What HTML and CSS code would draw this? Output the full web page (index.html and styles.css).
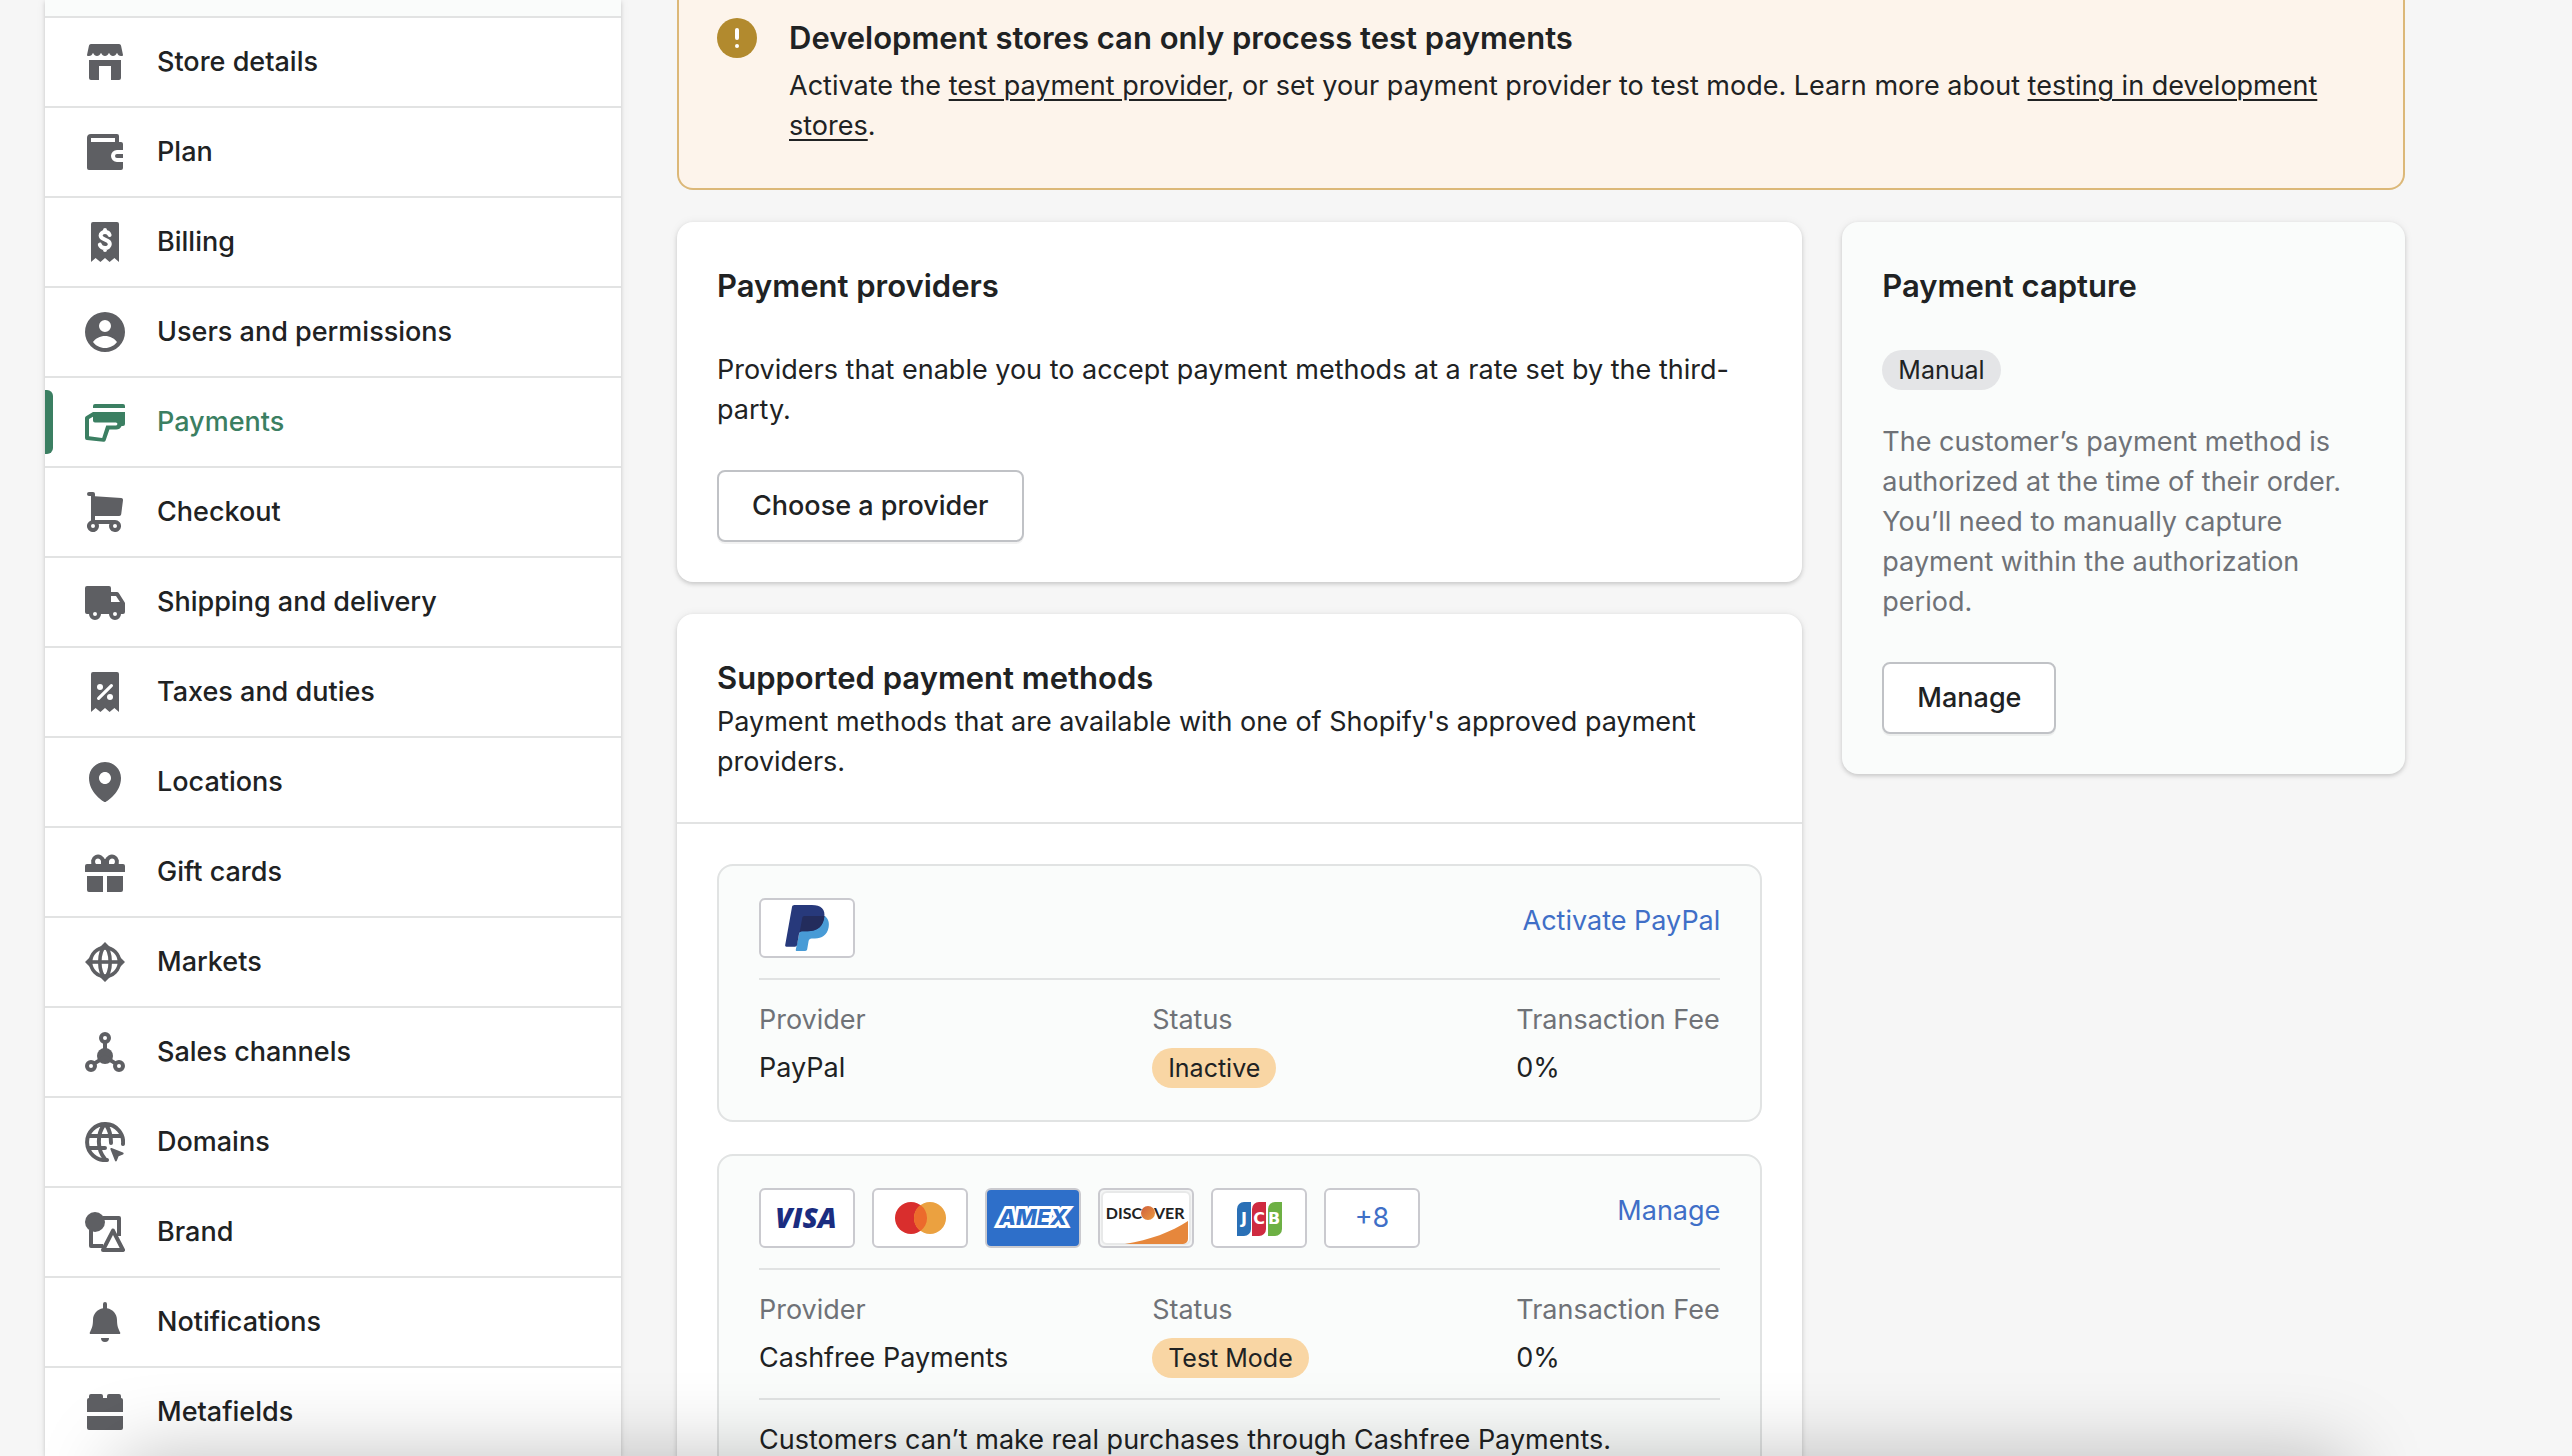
FILE: index.html
```html
<!DOCTYPE html>
<html lang="en">
<head>
<meta charset="utf-8">
<title>Settings - Payments</title>
<meta name="viewport" content="width=device-width, initial-scale=1">
<link rel="stylesheet" href="styles.css">
</head>
<body>
<div class="page">
  <nav class="sidebar" aria-label="Settings">
    <div class="sidebar-head"></div>
    <ul class="menu">
      <li><a class="menu-link" href="#store">
        <svg class="icon" viewBox="0 0 20 20"><path d="M3 1h14a1 1 0 0 1 1 .8l1 4.7c0 .6-.5.5-1 .5-1 0-1.500-.4-2-1.600-.5 1.200-1.200 1.600-2 1.600s-1.500-.4-2-1.600C11.500 6.600 10.800 7 10 7s-1.500-.4-2-1.600C7.500 6.600 6.800 7 6 7s-1.500-.4-2-1.600C3.500 6.600 3 7 2 7c-.5 0-1 .1-1-.5l1-4.700A1 1 0 0 1 3 1ZM2 9h16v9a1 1 0 0 1-1 1h-4v-7H7v7H3a1 1 0 0 1-1-1Z"/></svg>
        Store details</a></li>
      <li><a class="menu-link" href="#plan">
        <svg class="icon" viewBox="0 0 20 20"><path fill-rule="evenodd" d="M3 1h13a1 1 0 0 1 1 1v3h1a1 1 0 0 1 1 1v3h-3a3 3 0 0 0 0 6h3v3a1 1 0 0 1-1 1H2a1 1 0 0 1-1-1V3a2 2 0 0 1 2-2Zm0 2v2h12V3ZM16 11h3v2h-3a1 1 0 0 1 0-2Z"/></svg>
        Plan</a></li>
      <li><a class="menu-link" href="#billing">
        <svg class="icon" viewBox="0 0 20 20"><path d="M4 0h12a1 1 0 0 1 1 1v19l-2.300-2-2.400 2L10 18l-2.300 2-2.400-2L3 20V1a1 1 0 0 1 1-1Z"/><path fill="none" stroke="#fff" stroke-width="2" stroke-linecap="round" d="M12.300 6.500C12 5.500 11.200 5 10 5 8.800 5 7.800 5.700 7.800 6.800c0 2.600 4.600 1.400 4.600 4.200 0 1.200-1 2-2.400 2s-2.300-.7-2.600-1.700M10 4v1M10 13v1"/></svg>
        Billing</a></li>
      <li><a class="menu-link" href="#users">
        <svg class="icon" viewBox="0 0 20 20"><path fill-rule="evenodd" d="M10 0a10 10 0 1 1 0 20 10 10 0 0 1 0-20Zm0 4a3 3 0 1 0 0 6 3 3 0 0 0 0-6ZM4 15c1.300 1.800 3.500 3 6 3s4.700-1.200 6-3c-1.300-1.800-3.500-3-6-3s-4.700 1.200-6 3Z"/></svg>
        Users and permissions</a></li>
      <li><a class="menu-link active" href="#payments" aria-current="page">
        <svg class="icon" viewBox="0 0 20 20"><path fill-rule="evenodd" d="M5 1h14a1 1 0 0 1 1 1v1H4V2a1 1 0 0 1 1-1ZM4 5h16v6a1 1 0 0 1-1 1h-.7a3 3 0 0 1-2.800 1.800H12.200l-1.900 5.400a1 1 0 0 1-1.100.7L.9 19a1 1 0 0 1-.9-1V8c0-.4.200-.7.500-.9ZM2 8.500v8.600l6.600.9 2-6.200h4.700c.5 0 .9-.4.900-.8s-.3-.8-.8-.8H5a1 1 0 0 1-1-1V7.400Z"/></svg>
        Payments</a></li>
      <li><a class="menu-link" href="#checkout">
        <svg class="icon" viewBox="0 0 20 20"><path fill-rule="evenodd" d="M2 0h2a1 1 0 0 1 1 1v1.100l13.100.9a1 1 0 0 1 .9 1.100l-.9 7a1 1 0 0 1-1 .9H5v2h10a3 3 0 1 1-2.800 2H6.800A3 3 0 1 1 3 14.200V2H2a1 1 0 0 1 0-2ZM4 16a1 1 0 1 0 0 2 1 1 0 0 0 0-2Zm11 0a1 1 0 1 0 0 2 1 1 0 0 0 0-2Z"/></svg>
        Checkout</a></li>
      <li><a class="menu-link" href="#shipping">
        <svg class="icon" viewBox="0 0 20 20"><path fill-rule="evenodd" d="M1 2h11a1 1 0 0 1 1 1v2h3a1 1 0 0 1 .8.4l3 4.700a1 1 0 0 1 .2.600V15a1 1 0 0 1-1 1h-1a3 3 0 0 1-6 0H8a3 3 0 0 1-6 0H1a1 1 0 0 1-1-1V3a1 1 0 0 1 1-1Zm12 5v3h4.500l-2-3ZM5 15a1 1 0 1 0 0 2 1 1 0 0 0 0-2Zm10 0a1 1 0 1 0 0 2 1 1 0 0 0 0-2Z"/></svg>
        Shipping and delivery</a></li>
      <li><a class="menu-link" href="#taxes">
        <svg class="icon" viewBox="0 0 20 20"><path d="M4 0h12a1 1 0 0 1 1 1v19l-2.300-2-2.400 2L10 18l-2.300 2-2.400-2L3 20V1a1 1 0 0 1 1-1Z"/><g fill="#fff"><circle cx="7.500" cy="7.500" r="1.500"/><circle cx="12.500" cy="12.500" r="1.500"/></g><path stroke="#fff" stroke-width="1.600" stroke-linecap="round" d="m13.200 6.800-6.400 6.400"/></svg>
        Taxes and duties</a></li>
      <li><a class="menu-link" href="#locations">
        <svg class="icon" viewBox="0 0 20 20"><path d="M10 0C5.589 0 2 3.589 2 8c0 7.495 7.197 11.694 7.504 11.869a.996.996 0 0 0 .992 0C10.803 19.694 18 15.495 18 8c0-4.412-3.589-8-8-8zm0 11c-1.657 0-3-1.343-3-3s1.343-3 3-3 3 1.343 3 3-1.343 3-3 3z"/></svg>
        Locations</a></li>
      <li><a class="menu-link" href="#gift-cards">
        <svg class="icon" viewBox="0 0 20 20"><path d="M1 6h18a1 1 0 0 1 1 1v3H0V7a1 1 0 0 1 1-1ZM1 12h8v8H2a1 1 0 0 1-1-1ZM11 12h8v7a1 1 0 0 1-1 1h-7Z"/><path fill="none" stroke="currentColor" stroke-width="2" d="M4.700 6.500A2.500 2.500 0 1 1 9 4.500V6.500M15.300 6.500A2.500 2.500 0 1 0 11 4.500V6.500M10 3.500v3"/></svg>
        Gift cards</a></li>
      <li><a class="menu-link" href="#markets">
        <svg class="icon" viewBox="0 0 20 20"><path d="m10 0 3.500 3.500h-7ZM10 20l3.500-3.500h-7ZM0 10l3.500-3.500v7ZM20 10l-3.500-3.500v7Z"/><g fill="none" stroke="currentColor" stroke-width="1.800"><circle cx="10" cy="10" r="7.200"/><ellipse cx="10" cy="10" rx="2.600" ry="7.200"/><path d="M2 10h16"/></g></svg>
        Markets</a></li>
      <li><a class="menu-link" href="#channels">
        <svg class="icon" viewBox="0 0 20 20"><circle cx="10" cy="12" r="4"/><g fill="none" stroke="currentColor" stroke-width="2"><circle cx="10" cy="3" r="2"/><circle cx="3" cy="17" r="2"/><circle cx="17" cy="17" r="2"/><path d="M10 5v5M4.700 15.700 10 12.500l5.300 3.200"/></g></svg>
        Sales channels</a></li>
      <li><a class="menu-link" href="#domains">
        <svg class="icon" viewBox="0 0 20 20"><g fill="none" stroke="currentColor" stroke-width="2" stroke-linecap="round"><path d="M19 11A9 9 0 1 0 11 19M2 7h16M2 13h8M9.500 1.500C6 6 6 14 10 18.500M10.500 1.500C12.500 4 13 7 13 10.500"/></g><path d="m13.300 13 5.700 2.300c.5.200.4.800 0 .9l-2.200.9-.9 2.300c-.2.400-.7.400-.9 0l-2.300-5.800c-.1-.4.200-.8.600-.6Z"/></svg>
        Domains</a></li>
      <li><a class="menu-link" href="#brand">
        <svg class="icon" viewBox="0 0 20 20"><circle cx="5" cy="5" r="5"/><g fill="none" stroke="currentColor" stroke-width="2" stroke-linejoin="round"><path d="M9 3h8v9M3 9v8h6"/><path d="m14 9.300 5 9.700H9Z"/></g></svg>
        Brand</a></li>
      <li><a class="menu-link" href="#notifications">
        <svg class="icon" viewBox="0 0 20 20"><path d="M10 0a1 1 0 0 1 1 1v2.100c2.900.5 5 2.900 5 5.900 0 3 .7 4.500 1.600 6.200.2.400 0 .8-.5.800H2.900c-.5 0-.7-.4-.5-.8C3.300 13.500 4 12 4 9c0-3 2.100-5.400 5-5.900V1a1 1 0 0 1 1-1ZM8 18h4a2 2 0 0 1-4 0Z"/></svg>
        Notifications</a></li>
      <li><a class="menu-link" href="#metafields">
        <svg class="icon" viewBox="0 0 20 20"><path d="M3 1h5a1 1 0 0 1 1 1v1h2V2a1 1 0 0 1 1-1h5a1 1 0 0 1 1 1v1a1 1 0 0 1 1 1v6H1V4a1 1 0 0 1 1-1V2a1 1 0 0 1 1-1ZM1 12h18v6a1 1 0 0 1-1 1H2a1 1 0 0 1-1-1Z"/></svg>
        Metafields</a></li>
    </ul>
  </nav>

  <main class="content">
    <section class="banner">
      <svg class="icon banner-icon" viewBox="0 0 20 20"><circle cx="10" cy="10" r="10"/><path stroke="#fff" stroke-width="2" stroke-linecap="round" d="M10 6v4"/><circle cx="10" cy="14" r="1" fill="#fff"/></svg>
      <div class="banner-body">
        <h2 class="title">Development stores can only process test payments</h2>
        <p class="text">Activate the <a class="plain-link" href="#test-provider">test payment provider</a>, or set your payment provider to test mode. Learn more about <a class="plain-link" href="#testing">testing in development stores</a>.</p>
      </div>
    </section>

    <div class="columns">
      <div class="stack">
        <section class="card padded">
          <h2 class="title">Payment providers</h2>
          <p class="text">Providers that enable you to accept payment methods at a rate set by the third-party.</p>
          <button class="button" type="button">Choose a provider</button>
        </section>

        <section class="card">
          <header class="card-head">
            <h2 class="title">Supported payment methods</h2>
            <p class="text">Payment methods that are available with one of Shopify's approved payment providers.</p>
          </header>
          <div class="methods">
            <article class="method">
              <div class="method-top">
                <div class="chips">
                  <span class="chip"><svg viewBox="0 0 92 56" role="img" aria-label="PayPal"><path fill="#489bd6" d="M42 16h22c3.500 3 4.500 7 3.600 11.500C66 35 61 38.500 54 38.500h-3.500c-1.500 0-2.600 1-2.900 2.500l-1.400 8.300c-.2 1.100-1 1.700-2 1.700h-8.200c-.9 0-1.400-.7-1.200-1.600Z"/><path fill="#27397b" d="M33.500 5h17.300C60 5 64.800 9.500 63.200 17.500 61.500 27 55.500 31.300 46.500 31.300H41c-1.600 0-2.700 1-3 2.600l-2 11.100c-.2 1.100-1 1.700-2.100 1.700h-8.400c-1 0-1.500-.7-1.300-1.600l6.800-38.200C31.200 5.700 32.200 5 33.500 5Z"/><path fill="#232c5c" d="M43.500 16h19.900c-.5 10-6.700 15.300-16.900 15.300H41c-1 0-1.800.4-2.400 1.200l2.700-14.700c.2-1.100 1-1.800 2.200-1.800Z"/></svg></span>
                </div>
                <a class="link" href="#activate-paypal">Activate PayPal</a>
              </div>
              <dl class="facts">
                <div class="fact"><dt>Provider</dt><dd>PayPal</dd></div>
                <div class="fact"><dt>Status</dt><dd><span class="badge attention">Inactive</span></dd></div>
                <div class="fact"><dt>Transaction Fee</dt><dd>0%</dd></div>
              </dl>
            </article>

            <article class="method">
              <div class="method-top">
                <div class="chips">
                  <span class="chip"><svg viewBox="0 0 92 56"><text class="visa" x="45" y="38" text-anchor="middle">VISA</text></svg></span>
                  <span class="chip"><svg viewBox="0 0 92 56" role="img" aria-label="Mastercard"><circle cx="37" cy="28" r="16" fill="#d92e2d"/><circle cx="56" cy="28" r="16" fill="#eba140"/><path fill="#ec6a2c" d="M46.500 15.100a16 16 0 0 1 0 25.800 16 16 0 0 1 0-25.800Z"/></svg></span>
                  <span class="chip amex-chip"><svg viewBox="0 0 92 56"><text class="amex" x="46" y="35" text-anchor="middle">AMEX</text></svg></span>
                  <span class="chip discover-chip"><svg viewBox="0 0 92 56"><defs><linearGradient id="orb" x1="0" y1="0" x2="1" y2="1"><stop offset="0" stop-color="#cf5f3c"/><stop offset="1" stop-color="#eb9a3e"/></linearGradient></defs><rect x="2" y="2" width="88" height="52" rx="5" fill="#fff" stroke="#e8e9e9" stroke-width="2"/><path fill="#e6873c" d="M25 54C50 50 71 42 88 31v18a5 5 0 0 1-5 5Z"/><text class="discover" x="42" y="29" text-anchor="end">DISC</text><circle cx="48" cy="23" r="7" fill="url(#orb)"/><text class="discover" x="54" y="29">VER</text></svg></span>
                  <span class="chip"><svg viewBox="0 0 92 56"><path fill="#2a70b6" d="M31 12h7v27a7 7 0 0 1-7 7h-7V19a7 7 0 0 1 7-7Z"/><path fill="#cf2a40" d="M47 12h6v27a7 7 0 0 1-7 7h-7V19a7 7 0 0 1 7-7Z"/><path fill="#6db044" d="M62 12h7v27a7 7 0 0 1-7 7h-7V19a7 7 0 0 1 7-7Z"/><text class="jcb" x="31" y="34" text-anchor="middle">J</text><text class="jcb" x="46" y="34" text-anchor="middle">C</text><text class="jcb" x="61" y="34" text-anchor="middle">B</text></svg></span>
                  <button class="chip more" type="button">+8</button>
                </div>
                <a class="link" href="#manage-cashfree">Manage</a>
              </div>
              <dl class="facts">
                <div class="fact"><dt>Provider</dt><dd>Cashfree Payments</dd></div>
                <div class="fact"><dt>Status</dt><dd><span class="badge attention">Test Mode</span></dd></div>
                <div class="fact"><dt>Transaction Fee</dt><dd>0%</dd></div>
              </dl>
              <p class="text note">Customers can’t make real purchases through Cashfree Payments.</p>
            </article>
          </div>
        </section>
      </div>

      <aside class="card padded subdued">
        <h2 class="title">Payment capture</h2>
        <div class="capture">
          <span class="badge">Manual</span>
          <p class="text muted">The customer’s payment method is authorized at the time of their order. You’ll need to manually capture payment within the authorization period.</p>
        </div>
        <button class="button" type="button">Manage</button>
      </aside>
    </div>
  </main>
</div>
<div class="bottom-sheet" aria-hidden="true"></div>
</body>
</html>
```
FILE: styles.css
```css
* {
  box-sizing: border-box;
}

body {
  margin: 0;
  height: 100vh;
  overflow: hidden;
  background: #f6f6f6;
  color: #202223;
  font-family: Inter, "Liberation Sans", sans-serif;
  font-size: 27px;
  line-height: 40px;
}

h2,
p,
ul,
dl,
dd {
  margin: 0;
  padding: 0;
}

.page {
  display: flex;
  align-items: flex-start;
  gap: 56px;
  padding: 0 167px 0 45px;
}

/* Sidebar */
.sidebar {
  flex: none;
  width: 576px;
  background: #fff;
  box-shadow: 0 0 10px rgba(23, 24, 24, 0.06), 0 2px 4px rgba(0, 0, 0, 0.16);
}

.sidebar-head {
  height: 16px;
  background: #fafcfb;
}

.menu {
  list-style: none;
}

.menu-link {
  display: flex;
  align-items: center;
  gap: 32px;
  height: 90px;
  padding-left: 40px;
  border-top: 2px solid #e2e3e3;
  color: inherit;
  font-weight: 500;
  text-decoration: none;
}

.menu-link.active {
  position: relative;
  color: #3b7f62;
}

.menu-link.active::before {
  content: "";
  position: absolute;
  left: 0;
  top: 12px;
  bottom: 12px;
  width: 8px;
  border-radius: 0 6px 6px 0;
  background: #3b7f62;
}

.icon {
  flex: none;
  width: 40px;
  height: 40px;
  color: #5e5f63;
  fill: currentColor;
}

.active .icon {
  color: inherit;
}

/* Content */
.content {
  display: flex;
  flex: 1;
  flex-direction: column;
  gap: 32px;
  min-width: 0;
}

.banner {
  display: flex;
  gap: 32px;
  padding: 14px 38px 42px;
  border: 2px solid #dcb878;
  border-top: 0;
  border-radius: 0 0 16px 16px;
  background: #fdf4eb;
}

.icon.banner-icon {
  margin-top: 4px;
  color: #b28a2e;
}

.banner-body {
  display: flex;
  flex-direction: column;
  gap: 4px;
}

.title {
  font-size: 31px;
  font-weight: 600;
  line-height: 48px;
}

.plain-link {
  color: inherit;
  text-decoration-thickness: 2px;
  text-underline-offset: 4px;
}

.columns {
  display: grid;
  grid-template-columns: 2fr 1fr;
  align-items: start;
  gap: 40px;
}

.stack {
  display: flex;
  flex-direction: column;
  gap: 32px;
  min-width: 0;
}

.card {
  border-radius: 16px;
  background: #fff;
  box-shadow: 0 0 10px rgba(23, 24, 24, 0.06), 0 2px 4px rgba(0, 0, 0, 0.16);
}

.padded {
  display: flex;
  flex-direction: column;
  align-items: flex-start;
  gap: 40px;
  padding: 40px;
}

.subdued {
  background: #fafcfb;
}

.muted {
  color: #6f7277;
}

.button {
  height: 72px;
  padding: 0 33px;
  border: 2px solid #c0c2c6;
  border-radius: 8px;
  background: #fff;
  box-shadow: 0 2px 0 rgba(0, 0, 0, 0.05);
  color: inherit;
  font: inherit;
  font-weight: 500;
}

.card-head {
  padding: 40px;
  border-bottom: 2px solid #e2e3e3;
}

.methods {
  display: flex;
  flex-direction: column;
  gap: 32px;
  padding: 40px;
}

.method {
  padding: 32px 40px;
  border: 2px solid #e1e3e3;
  border-radius: 16px;
  background: #fafcfb;
}

.method-top {
  display: flex;
  justify-content: space-between;
  padding-bottom: 20px;
  border-bottom: 2px solid #e1e3e3;
}

.chips {
  display: flex;
  gap: 17px;
}

.chip {
  display: block;
  width: 96px;
  height: 60px;
  padding: 0;
  overflow: hidden;
  border: 2px solid #cacacf;
  border-radius: 6px;
  background: #fff;
}

.chip svg {
  display: block;
  width: 100%;
  height: 100%;
}

.amex-chip {
  background: #2e6fc9;
}

.discover-chip {
  background: #f4f5f5;
}

.more {
  color: #3f6fc7;
  font: inherit;
}

.visa {
  fill: #1a2c80;
  font: italic 800 28px "Open Sans", sans-serif;
}

.amex {
  fill: #2e6fc9;
  stroke: #fff;
  stroke-width: 6px;
  stroke-linejoin: miter;
  paint-order: stroke;
  font: italic 800 22px Inter, sans-serif;
}

.discover {
  fill: #222;
  font: 700 16px Lato, sans-serif;
}

.jcb {
  fill: #fff;
  font: 700 16px "DejaVu Sans", sans-serif;
}

.link {
  padding-top: 3px;
  color: #3f6fc7;
  text-decoration: none;
}

.facts {
  display: grid;
  grid-template-columns: 393fr 364fr 204fr;
  padding-top: 20px;
}

.fact {
  display: flex;
  flex-direction: column;
  gap: 8px;
  white-space: nowrap;
}

.fact dt {
  color: #6f7277;
}

.badge {
  display: block;
  width: max-content;
  padding: 0 16px;
  border-radius: 20px;
  background: #e4e5e7;
  font-size: 25px;
}

.attention {
  background: #f9d6a4;
}

.note {
  margin-top: 20px;
  padding-top: 20px;
  border-top: 2px solid #e1e3e3;
}

.capture {
  display: flex;
  flex-direction: column;
  gap: 32px;
}

/* Sheet waiting below the fold; only its shadow reaches the page */
.bottom-sheet {
  position: fixed;
  top: 100%;
  left: 120px;
  right: 227px;
  height: 200px;
  box-shadow: 0 0 80px rgba(0, 0, 0, 0.25);
}
```
